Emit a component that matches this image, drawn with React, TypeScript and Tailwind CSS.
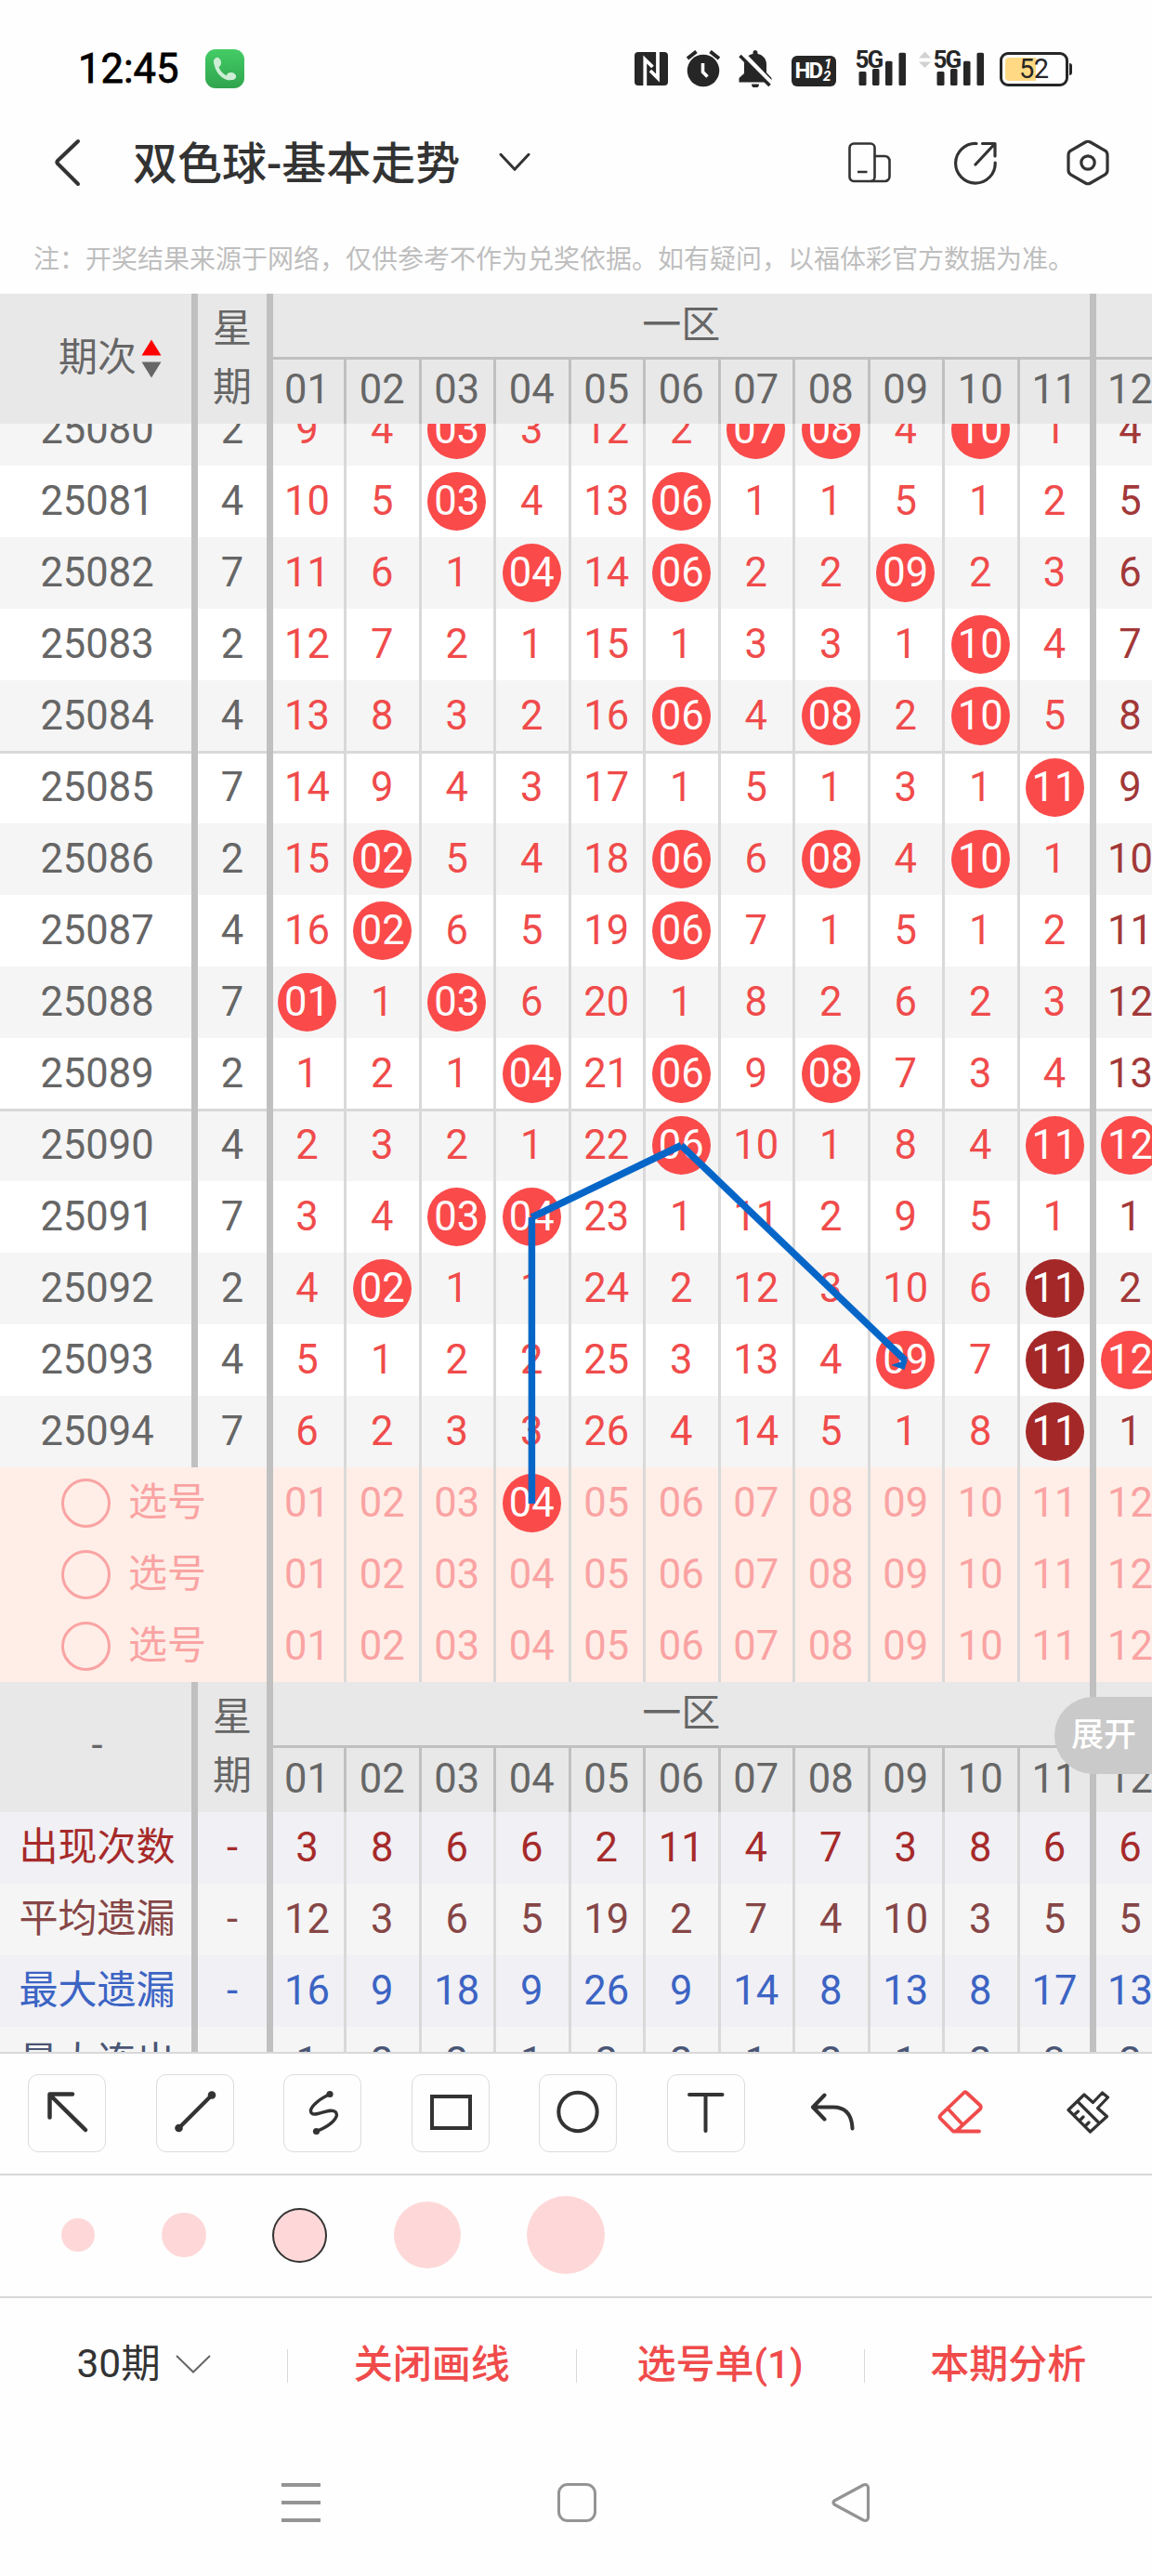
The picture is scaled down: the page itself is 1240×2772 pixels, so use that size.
import type { ReactNode } from "react";

type Draw = { issue: string; day: string; cells: string };

// "o" marks a drawn ball, "x" a repeated ball, plain numbers are miss counts.
const draws: Draw[] = [
  { issue: "25080", day: "2", cells: "9 4 o03 3 12 2 o07 o08 4 o10 1 4" },
  { issue: "25081", day: "4", cells: "10 5 o03 4 13 o06 1 1 5 1 2 5" },
  { issue: "25082", day: "7", cells: "11 6 1 o04 14 o06 2 2 o09 2 3 6" },
  { issue: "25083", day: "2", cells: "12 7 2 1 15 1 3 3 1 o10 4 7" },
  { issue: "25084", day: "4", cells: "13 8 3 2 16 o06 4 o08 2 o10 5 8" },
  { issue: "25085", day: "7", cells: "14 9 4 3 17 1 5 1 3 1 o11 9" },
  { issue: "25086", day: "2", cells: "15 o02 5 4 18 o06 6 o08 4 o10 1 10" },
  { issue: "25087", day: "4", cells: "16 o02 6 5 19 o06 7 1 5 1 2 11" },
  { issue: "25088", day: "7", cells: "o01 1 o03 6 20 1 8 2 6 2 3 12" },
  { issue: "25089", day: "2", cells: "1 2 1 o04 21 o06 9 o08 7 3 4 13" },
  { issue: "25090", day: "4", cells: "2 3 2 1 22 o06 10 1 8 4 o11 o12" },
  { issue: "25091", day: "7", cells: "3 4 o03 o04 23 1 11 2 9 5 1 1" },
  { issue: "25092", day: "2", cells: "4 o02 1 1 24 2 12 3 10 6 x11 2" },
  { issue: "25093", day: "4", cells: "5 1 2 2 25 3 13 4 o09 7 x11 o12" },
  { issue: "25094", day: "7", cells: "6 2 3 3 26 4 14 5 1 8 x11 1" },
];

const picks = [
  "01 02 03 o04 05 06 07 08 09 10 11 12",
  "01 02 03 04 05 06 07 08 09 10 11 12",
  "01 02 03 04 05 06 07 08 09 10 11 12",
];

const stats = [
  { name: "出现次数", color: "text-[#a62a2a]", bg: "bg-[#f0f0f5]", cells: "3 8 6 6 2 11 4 7 3 8 6 6" },
  { name: "平均遗漏", color: "text-[#864646]", bg: "bg-[#f5f5f5]", cells: "12 3 6 5 19 2 7 4 10 3 5 5" },
  { name: "最大遗漏", color: "text-[#3c64c4]", bg: "bg-[#f0f0f5]", cells: "16 9 18 9 26 9 14 8 13 8 17 13" },
  { name: "最大连出", color: "text-[#4a5675]", bg: "bg-[#f5f5f5]", cells: "1 2 2 1 2 2 1 2 1 2 3 2" },
];

const numbers = "01 02 03 04 05 06 07 08 09 10 11 12".split(" ");

function cellBox(i: number, header = false) {
  if (i === 0) return "w-[76px] pr-[3px]";
  if (i === 11) return "w-[81px] border-l-[7px] border-[#c0c0c0]";
  const line = header ? "border-[#c0c0c0]" : "border-[#d9d9d9]";
  return `${i === 10 ? "w-[78px]" : "w-[80.5px] pr-px"} border-l-[3px] ${line}`;
}

function Cells({ values, color, lastColor }: { values: string; color: string; lastColor?: string }) {
  return (
    <>
      {values.split(" ").map((v, i) => {
        const ball = v[0] === "o" || v[0] === "x";
        return (
          <div
            key={i}
            className={`relative z-10 flex shrink-0 items-center justify-center ${cellBox(i)} ${i === 11 && lastColor ? lastColor : color}`}
          >
            {ball ? (
              <span
                className={`flex size-[63px] shrink-0 items-center justify-center rounded-full pb-px text-white ${v[0] === "o" ? "bg-[#fa4a4a]" : "bg-[#a52828]"}`}
              >
                {v.slice(1)}
              </span>
            ) : (
              <span className="pb-px">{v}</span>
            )}
          </div>
        );
      })}
    </>
  );
}

function IssueCell({ children, className = "" }: { children: ReactNode; className?: string }) {
  return (
    <div className={`relative z-10 flex w-[213px] shrink-0 items-center justify-center border-r-[7px] border-[#c0c0c0] pb-px pl-[3px] ${className}`}>
      {children}
    </div>
  );
}

function DayCell({ children }: { children: ReactNode }) {
  return (
    <div className="relative z-10 flex w-[81px] shrink-0 items-center justify-center border-r-[7px] border-[#c0c0c0] pb-px">
      {children}
    </div>
  );
}

function TableHead({ children }: { children: ReactNode }) {
  return (
    <div className="flex h-[140px] shrink-0 bg-[#e8e8e8] text-[#666]">
      <div className="flex w-[213px] shrink-0 items-center justify-center border-r-[7px] border-[#c0c0c0]">{children}</div>
      <div className="flex w-[81px] shrink-0 flex-col items-center border-r-[7px] border-[#c0c0c0] pt-[6px] text-[42px] leading-[63px]">
        <span>星</span>
        <span>期</span>
      </div>
      <div className="flex w-[960px] shrink-0 flex-col">
        <div className="flex h-[68px]">
          <div className="flex w-[878.5px] items-center justify-center text-[42px] leading-none">一区</div>
          <div className="w-[81px] border-l-[7px] border-[#c0c0c0]" />
        </div>
        <div className="flex h-[72px] border-t-[3px] border-[#c0c0c0]">
          {numbers.map((n, i) => (
            <div key={n} className={`flex shrink-0 items-center justify-center pb-[3px] ${cellBox(i, true)}`}>
              {n}
            </div>
          ))}
        </div>
      </div>
    </div>
  );
}

function Signal() {
  return (
    <div className="relative h-[40px] w-[54px]">
      <span className="absolute -top-px left-0 text-[26px] leading-[22px] font-bold tracking-[-2px] text-[#262626]">5G</span>
      <svg className="absolute inset-0" width="54" height="40" fill="#262626">
        <rect x="3.5" y="23" width="8" height="15" rx="1.5" />
        <rect x="18" y="20" width="7.5" height="18" rx="1.5" />
        <rect x="32" y="11.7" width="7.5" height="26.3" rx="1.5" />
        <rect x="46.5" y="2.7" width="7.5" height="35.3" rx="1.5" />
      </svg>
    </div>
  );
}

function StatusBar() {
  return (
    <div className="mt-[54px] flex h-[40px] items-center pr-[86px] pl-[84px]">
      <span className="w-[137px] pt-[2px] text-[43.5px] leading-[40px] text-black [-webkit-text-stroke:0.8px_black]">12:45</span>
      <svg width="42" height="42" viewBox="0 0 42 42">
        <defs>
          <linearGradient id="call" x1="0" y1="0" x2="0" y2="1">
            <stop offset="0" stopColor="#44cc66" />
            <stop offset="1" stopColor="#2fa44d" />
          </linearGradient>
        </defs>
        <rect width="42" height="42" rx="11" fill="url(#call)" />
        <ellipse cx="13" cy="14" rx="4" ry="5.2" fill="#cdeed5" transform="rotate(-12 13 14)" />
        <ellipse cx="28" cy="29" rx="5.2" ry="4" fill="#cdeed5" transform="rotate(12 28 29)" />
        <path d="M11.500 15C12.500 23.500 18.500 30.500 27 31.500" stroke="#cdeed5" strokeWidth="4" fill="none" />
      </svg>
      <div className="ml-auto flex items-center">
        <svg width="36" height="36" viewBox="0 0 36 36">
          <rect width="36" height="36" rx="4" fill="#262626" />
          <path d="M11.300 36V8L19.500 16" fill="none" stroke="#fff" strokeWidth="3.800" />
          <path d="M25 0V28L17 20" fill="none" stroke="#fff" strokeWidth="3.800" />
        </svg>
        <svg className="ml-[20px]" width="36" height="40" viewBox="0 0 36 40">
          <circle cx="18" cy="22" r="17.300" fill="#262626" />
          <path d="M1 9L10.500 1.500M35 9L25.500 1.500" stroke="#262626" strokeWidth="4" />
          <path d="M17.500 14V23.500L22.500 28.500" stroke="#fff" strokeWidth="3.600" fill="none" />
        </svg>
        <svg className="ml-[20px]" width="36" height="40" viewBox="0 0 36 40">
          <path d="M15.500 2.500A2.500 2.500 0 0 1 20.500 2.500V4C26 5 30 9.500 30 15V24L35.500 30V34.500H.5V30L6 25V15C6 9.500 10 5 15.500 4ZM14 36.500H22A4 4 0 0 1 14 36.500Z" fill="#262626" />
          <path d="M5.500 4.500L36 36" stroke="#fff" strokeWidth="5" />
          <path d="M1.500 6L33.500 38" stroke="#262626" strokeWidth="3.500" />
        </svg>
        <div className="mt-[4px] ml-[21px] flex h-[33px] w-[48px] items-center justify-center gap-px rounded-[6px] bg-[#262626] text-white">
          <span className="text-[24px] leading-none font-bold tracking-[-2px]">HD</span>
          <span className="flex flex-col pl-px text-[15px] leading-[13px] font-bold italic">
            <span className="pl-px">1</span>
            <span>2</span>
          </span>
        </div>
        <div className="ml-[21px]">
          <Signal />
        </div>
        <svg className="mb-[1px] ml-[14px]" width="13" height="40" viewBox="0 0 13 40" fill="#d2d2d2">
          <path d="M0 8.500L6.500 1.500L13 8.500ZM0 12.500H13L6.500 19Z" />
        </svg>
        <div className="ml-[3px]">
          <Signal />
        </div>
        <div className="ml-[17.5px] flex h-[37px] w-[74px] items-center rounded-[9px] border-[3px] border-[#262626] p-[3px]">
          <div className="h-full w-[33px] rounded-l-[4px] bg-[#ffd983]" />
          <span className="-ml-[18px] text-[29px] leading-none tracking-[-0.5px] text-[#262626]">52</span>
        </div>
        <div className="ml-px h-[13px] w-[3px] rounded-r bg-[#262626]" />
      </div>
    </div>
  );
}

function TitleBar() {
  return (
    <div className="mt-[51px] flex h-[60px] items-center pl-[57px] text-[#333]">
      <svg width="30" height="54" viewBox="0 0 30 54" fill="none" stroke="#333" strokeWidth="4" strokeLinecap="round" strokeLinejoin="round">
        <path d="M27 4L5 25Q3.500 26.500 5 28L27 50" />
      </svg>
      <span className="ml-[56px] w-[394px] pt-[3px] text-[48px] leading-[60px] font-medium whitespace-nowrap">双色球-基本走势</span>
      <svg width="34" height="20" viewBox="0 0 34 20" fill="none" stroke="#333" strokeWidth="3" strokeLinecap="round" strokeLinejoin="round">
        <path d="M2 .5L17 16.500L32 .5" transform="translate(0 .8)" />
      </svg>
      <svg className="ml-[342px]" width="46" height="44" viewBox="0 0 46 44" fill="none" stroke="#333" strokeWidth="2.600">
        <rect x="1.500" y="1.500" width="27" height="40.500" rx="4.500" />
        <path d="M28.500 15H39.500A5 5 0 0 1 44.500 20V37A5 5 0 0 1 39.500 42H24M10 32H20.500" strokeLinejoin="round" />
      </svg>
      <svg className="ml-[68px]" width="46" height="48" viewBox="0 0 46 48" fill="none" stroke="#333" strokeWidth="3.200" strokeLinecap="round" strokeLinejoin="round">
        <path d="M24 3.500A21.300 21.300 0 1 0 44.200 24M30.500 3.500H44V17M43.500 4L23 26" />
      </svg>
      <svg className="ml-[75px]" width="46" height="50" viewBox="0 0 46 50" fill="none" stroke="#333" strokeWidth="3.200" strokeLinejoin="round">
        <path d="M20.300 3Q23 1.500 25.700 3L41.500 12.200Q44 13.700 44 16.700V33.300Q44 36.300 41.500 37.800L25.700 47Q23 48.500 20.300 47L4.500 37.800Q2 36.300 2 33.300V16.700Q2 13.700 4.500 12.200Z" />
        <circle cx="23" cy="25" r="7.200" />
      </svg>
    </div>
  );
}

const tools: { name: string; boxed: boolean; drawing: ReactNode }[] = [
  {
    name: "arrow",
    boxed: true,
    drawing: <path d="M23.500 46.500V21.500H48M24.500 23L62 60" strokeWidth="4.500" />,
  },
  {
    name: "line",
    boxed: true,
    drawing: (
      <>
        <path d="M24.500 58L60 22.500" strokeWidth="4.200" />
        <circle cx="24.500" cy="58" r="4.300" fill="#333" stroke="none" />
        <circle cx="60" cy="22.500" r="4.300" fill="#333" stroke="none" />
      </>
    ),
  },
  {
    name: "curve",
    boxed: true,
    drawing: (
      <>
        <path d="M50 21.500C38 27 26 37 30.500 42C35 46.500 50 35.500 56 40.500C61.500 46 50 56 35.500 61.500" strokeWidth="3.400" />
        <circle cx="50" cy="21.500" r="3.600" fill="#333" stroke="none" />
        <circle cx="35.500" cy="61.500" r="3.600" fill="#333" stroke="none" />
      </>
    ),
  },
  { name: "rectangle", boxed: true, drawing: <rect x="22" y="24" width="41" height="34" strokeWidth="4" strokeLinejoin="miter" /> },
  { name: "circle", boxed: true, drawing: <circle cx="42" cy="40.500" r="20.700" strokeWidth="4" /> },
  { name: "text", boxed: true, drawing: <path d="M24 22H59.500M41.500 22V61" strokeWidth="4" /> },
  { name: "undo", boxed: false, drawing: <path d="M32.500 22.500L20 35.500L32.500 48.500M21 35.500H42Q61.500 35.500 62.500 58.500" strokeWidth="4" /> },
  {
    name: "eraser",
    boxed: false,
    drawing: (
      <g stroke="#f04b4b">
        <path d="M44 20.500Q46 18 48 20.500L62 33.500Q63.500 35.500 62 37.500L36 61.500H33L19.500 48Q17.500 46 19.500 44ZM28.500 38.500L43 54M34 61.500H61" strokeWidth="3.800" />
      </g>
    ),
  },
  {
    name: "brush",
    boxed: false,
    drawing: (
      <path d="M37 22L20 38.500L43.500 62L61.500 45.500L51.500 36.500L62.500 25L56.500 20L46.500 30.500ZM30 29.500L53 52.500M26 44L30.500 40M32 50L36 46M38 56L42 52" strokeWidth="3.200" />
    ),
  },
];

const dots = [
  { key: "xs", size: "size-[36px]" },
  { key: "sm", size: "size-[48px]" },
  { key: "md", size: "size-[59px] border-2 border-[#333]" },
  { key: "lg", size: "size-[72px]" },
  { key: "xl", size: "size-[84px]" },
];

export default function App() {
  return (
    <div className="flex h-[2772px] w-[1240px] flex-col overflow-hidden bg-[#fefefe] font-[Roboto,'Noto_Sans_CJK_SC',sans-serif]">
      <StatusBar />
      <TitleBar />
      <p className="mt-[59px] h-[52px] pl-[36px] text-[28px] leading-[32px] whitespace-nowrap text-[#bebebe]">
        注：开奖结果来源于网络，仅供参考不作为兑奖依据。如有疑问，以福体彩官方数据为准。
      </p>

      <div className="relative h-[1892px] shrink-0 overflow-hidden text-[43.5px] leading-none">
        <TableHead>
          <span className="ml-[31px] pb-[2px] text-[42px]">期次</span>
          <svg className="ml-[5px]" width="22" height="42" viewBox="0 0 22 42">
            <path d="M.5 17.500L11 .5L21.500 17.500Z" fill="#ff0000" />
            <path d="M.5 24.500H21.500L11 41.500Z" fill="#666" />
          </svg>
        </TableHead>
        <div className="h-[1752px] overflow-hidden">
          <div className="-mt-[31.7px]">
            {draws.map((d, i) => (
              <div key={d.issue} className={`relative flex h-[77px] ${i % 2 === 0 ? "bg-[#f5f5f5]" : "bg-white"} text-[#666]`}>
                {i > 0 && i % 5 === 0 && <div className="absolute -top-[1.5px] left-0 h-[3px] w-full bg-[#d9d9d9]" />}
                <IssueCell>{d.issue}</IssueCell>
                <DayCell>{d.day}</DayCell>
                <Cells values={d.cells} color="text-[#f04b4b]" lastColor="text-[#a23838]" />
              </div>
            ))}
            {picks.map((p, i) => (
              <div key={i} className="flex h-[77px] bg-[#feeee7] text-[#faa3a3]">
                <div className="flex w-[294px] shrink-0 items-center border-r-[7px] border-[#c0c0c0] pl-[66px]">
                  <span className="size-[53px] rounded-full border-[3px] border-[#faa3a3]" />
                  <span className="ml-[19px] pb-[2px] text-[42px]">选号</span>
                </div>
                <Cells values={p} color="text-[#faa3a3]" />
              </div>
            ))}
            <TableHead>
              <span className="pb-[3px] pl-[3px]">-</span>
            </TableHead>
            {stats.map((s) => (
              <div key={s.name} className={`flex h-[77px] ${s.bg} ${s.color}`}>
                <IssueCell className="text-[42px]">{s.name}</IssueCell>
                <DayCell>-</DayCell>
                <Cells values={s.cells} color={s.color} />
              </div>
            ))}
          </div>
        </div>

        <svg className="absolute inset-0 z-20" width="1240" height="1892" viewBox="0 316 1240 1892" stroke="#0566c8" strokeWidth="7.500">
          <path d="M572.400 1618V1310" />
          <path d="M572.400 1310L733.300 1232.500" />
          <path d="M733.300 1232.500L974.500 1464" />
          <path d="M959 1469L977 1463L973.500 1474Z" fill="#0566c8" strokeWidth="0" />
        </svg>
        <button className="absolute top-[1510px] right-0 z-30 h-[83px] w-[105px] rounded-l-full bg-[#cacaca] pl-[18px] text-left text-[35px] leading-none font-medium text-white">
          展开
        </button>
      </div>

      <div className="flex h-[131px] shrink-0 items-start border-t-2 border-[#d8d8d8] pt-[22px] pl-[30px]">
        {tools.map((t) => (
          <div
            key={t.name}
            className={`mr-[53.5px] flex size-[84px] shrink-0 items-center justify-center rounded-[11px] ${t.boxed ? "border border-[#dcdcdc]" : ""}`}
          >
            <svg className="shrink-0" width="84" height="84" viewBox="0 0 84 84" fill="none" stroke="#333" strokeLinecap="round" strokeLinejoin="round">
              {t.drawing}
            </svg>
          </div>
        ))}
      </div>

      <div className="flex h-[132px] shrink-0 items-center gap-[71.5px] border-t-2 border-[#d8d8d8] pb-[2px] pl-[66px]">
        {dots.map((d) => (
          <div key={d.key} className={`shrink-0 rounded-full bg-[#fed8d8] ${d.size}`} />
        ))}
      </div>

      <div className="flex h-[147px] shrink-0 items-center border-t-2 border-[#d8d8d8] text-[42px] leading-none font-medium text-[#f04b4b]">
        <div className="flex flex-1 items-center justify-center text-[42.5px] font-normal text-[#333]">
          <span className="pb-[2px]">30期</span>
          <svg className="-mt-[4px] ml-[16px]" width="38" height="20" viewBox="0 0 38 20" fill="none" stroke="#666" strokeWidth="2">
            <path d="M1 1L19 18.500L37 1" />
          </svg>
        </div>
        {["关闭画线", "选号单(1)", "本期分析"].map((label) => (
          <div key={label} className="flex h-[36px] flex-1 items-center justify-center border-l border-[#d8d8d8]">
            <span className="pb-[2px]">{label}</span>
          </div>
        ))}
      </div>

      <div className="mt-[53px] flex h-[44px] shrink-0 items-center pl-[303px]">
        <svg width="42" height="44" viewBox="0 0 42 44" stroke="#949494" strokeWidth="4">
          <path d="M0 3H42M0 22H42M0 41H42" />
        </svg>
        <div className="ml-[255px] size-[42px] rounded-[11px] border-[3.5px] border-[#949494]" />
        <svg className="ml-[253px]" width="42" height="44" viewBox="0 0 42 44" fill="none" stroke="#949494" strokeWidth="3.200" strokeLinejoin="round">
          <path d="M3 20L34.500 3Q39 1.500 39.500 6V38Q39 42.500 34.500 41L3 24Q1 22 3 20Z" />
        </svg>
      </div>
    </div>
  );
}
